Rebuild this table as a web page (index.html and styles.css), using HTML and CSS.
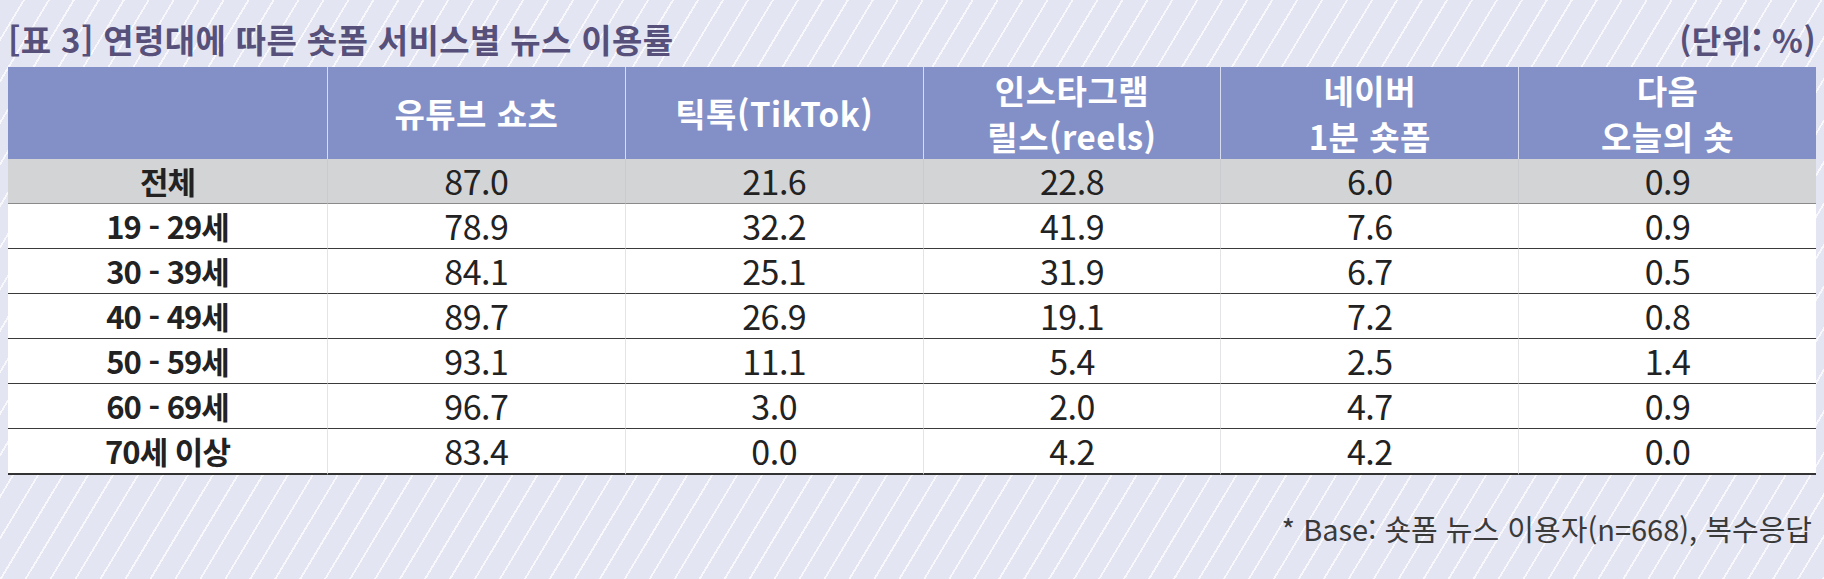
FILE: index.html
```html
<!DOCTYPE html>
<html lang="ko">
<head>
<meta charset="utf-8">
<title>연령대에 따른 숏폼 서비스별 뉴스 이용률</title>
<link rel="stylesheet" href="styles.css">
</head>
<body>
<div class="page">
  <div class="caption">
    <h1 class="title">[표 3] 연령대에 따른 숏폼 서비스별 뉴스 이용률</h1>
    <span class="unit">(단위: %)</span>
  </div>
  <table class="data">
    <colgroup>
      <col class="c-label">
      <col class="c-val"><col class="c-val"><col class="c-val"><col class="c-val"><col class="c-val">
    </colgroup>
    <thead>
      <tr>
        <th></th>
        <th>유튜브 쇼츠</th>
        <th>틱톡(TikTok)</th>
        <th>인스타그램<br>릴스(reels)</th>
        <th>네이버<br>1분 숏폼</th>
        <th>다음<br>오늘의 숏</th>
      </tr>
    </thead>
    <tbody>
      <tr class="total"><th>전체</th><td>87.0</td><td>21.6</td><td>22.8</td><td>6.0</td><td>0.9</td></tr>
      <tr><th>19 - 29세</th><td>78.9</td><td>32.2</td><td>41.9</td><td>7.6</td><td>0.9</td></tr>
      <tr><th>30 - 39세</th><td>84.1</td><td>25.1</td><td>31.9</td><td>6.7</td><td>0.5</td></tr>
      <tr><th>40 - 49세</th><td>89.7</td><td>26.9</td><td>19.1</td><td>7.2</td><td>0.8</td></tr>
      <tr><th>50 - 59세</th><td>93.1</td><td>11.1</td><td>5.4</td><td>2.5</td><td>1.4</td></tr>
      <tr><th>60 - 69세</th><td>96.7</td><td>3.0</td><td>2.0</td><td>4.7</td><td>0.9</td></tr>
      <tr class="last"><th>70세 이상</th><td>83.4</td><td>0.0</td><td>4.2</td><td>4.2</td><td>0.0</td></tr>
    </tbody>
  </table>
  <p class="note">* Base: 숏폼 뉴스 이용자(n=668), 복수응답</p>
</div>
</body>
</html>
```

FILE: styles.css
```css
html, body {
  margin: 0;
  padding: 0;
}
body {
  width: 1824px;
  height: 579px;
  overflow: hidden;
  background-color: #e4e5f2;
  background-image: repeating-linear-gradient(121deg,
    rgba(255,255,255,0) 0px,
    rgba(255,255,255,0) 19.6px,
    rgba(255,255,255,0.75) 19.6px,
    rgba(255,255,255,0.75) 21.4px);
  font-family: "Noto Sans CJK KR", "Noto Sans", sans-serif;
  color: #222;
}
.page {
  padding: 18px 8px 0 8px;
}
.caption {
  display: flex;
  justify-content: space-between;
  align-items: center;
  height: 42px;
  margin-bottom: 7px;
  color: #56507a;
}
.title {
  margin: 0;
  font-size: 33px;
  font-weight: 700;
  line-height: 42px;
  letter-spacing: 0.35px;
}
.unit {
  font-size: 32px;
  font-weight: 700;
  line-height: 42px;
  letter-spacing: 0.5px;
}
.data {
  width: 1808px;
  table-layout: fixed;
  border-collapse: separate;
  border-spacing: 0;
  background: #ffffff;
}
.c-label { width: 319px; }
.c-val { width: 297.8px; }
.data thead th {
  background: #8390c7;
  color: #ffffff;
  font-size: 33px;
  font-weight: 700;
  line-height: 46px;
  height: 91px;
  padding: 0;
  box-sizing: border-box;
  text-align: center;
  vertical-align: middle;
  border-left: 1px solid #d8dcf0;
  letter-spacing: 0.5px;
}
.data thead th:first-child {
  border-left: none;
}
.data tbody th,
.data tbody td {
  height: 45px;
  box-sizing: border-box;
  padding: 0;
  text-align: center;
  vertical-align: middle;
  border-bottom: 1px solid #3a3a3a;
  line-height: 44px;
}
.data tbody td {
  font-size: 34px;
  font-weight: 400;
  letter-spacing: -0.5px;
  border-left: 1px solid #e4e4e6;
}
.data tbody th {
  font-size: 31px;
  font-weight: 700;
  letter-spacing: -1px;
}
.data tbody tr.total th,
.data tbody tr.total td {
  background: #d3d4d6;
  border-bottom-color: #8a8a8a;
}
.data tbody tr.total td {
  border-left-color: #cacbce;
}
.data tbody tr.last th,
.data tbody tr.last td {
  border-bottom: 2px solid #333333;
}
.note {
  margin: 33px 4px 0 0;
  text-align: right;
  font-size: 29px;
  line-height: 40px;
  color: #3a3a3a;
}
```
